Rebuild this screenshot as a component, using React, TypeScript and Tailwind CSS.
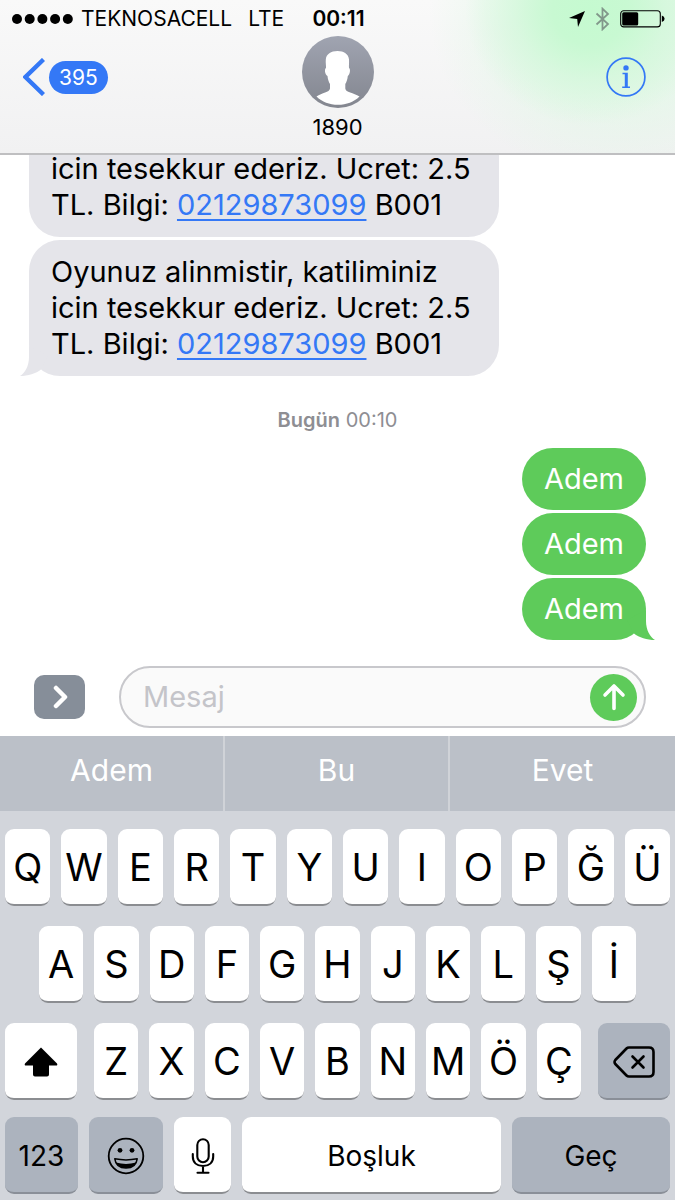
import React from 'react';

const received = [
  { id: 1, before: 'Oyunuz alinmistir, katiliminiz icin tesekkur ederiz. Ucret: 2.5 TL. Bilgi: ', phone: '02129873099', after: ' B001' },
  { id: 2, before: 'Oyunuz alinmistir, katiliminiz icin tesekkur ederiz. Ucret: 2.5 TL. Bilgi: ', phone: '02129873099', after: ' B001' },
];

const sent = ['Adem', 'Adem', 'Adem'];
const suggestions = ['Adem', 'Bu', 'Evet'];

const rowOne = ['Q', 'W', 'E', 'R', 'T', 'Y', 'U', 'I', 'O', 'P', 'Ğ', 'Ü'];
const rowTwo = ['A', 'S', 'D', 'F', 'G', 'H', 'J', 'K', 'L', 'Ş', 'İ'];
const rowThree = ['Z', 'X', 'C', 'V', 'B', 'N', 'M', 'Ö', 'Ç'];

const StatusBar: React.FC = () => (
  <div className="grid grid-cols-[1fr_auto_1fr] items-center h-9 pt-0.5 pl-3 pr-2.5 text-[21px] text-black">
    <div className="flex items-center">
      <svg width="61" height="10" viewBox="0 0 61 10" aria-hidden="true">
        <circle cx="5" cy="5" r="5" />
        <circle cx="17.7" cy="5" r="5" />
        <circle cx="30.4" cy="5" r="5" />
        <circle cx="43.1" cy="5" r="5" />
        <circle cx="55.8" cy="5" r="5" />
      </svg>
      <span className="ml-2">TEKNOSACELL</span>
      <span className="ml-4">LTE</span>
    </div>
    <span className="font-semibold">00:11</span>
    <div className="flex items-center justify-end">
      {/* Location */}
      <svg width="16" height="16" viewBox="0 0 16 16" aria-hidden="true">
        <path d="M16 0 L9 16 L8.2 8 L0 7 Z" />
      </svg>
      {/* Bluetooth */}
      <svg className="ml-2.5" width="15" height="24" viewBox="0 0 15 24" fill="none" stroke="#82978a" strokeWidth="1.8" aria-hidden="true">
        <path d="M1.5 6.5 L13 17 L7.5 22.3 V1.7 L13 7 L1.5 17.5" />
      </svg>
      {/* Battery */}
      <svg className="ml-2.5" width="45" height="18" viewBox="0 0 45 18" aria-hidden="true">
        <rect x="0.7" y="0.7" width="39.6" height="16.2" rx="3" fill="none" stroke="#000" strokeWidth="1.1" />
        <rect x="2.2" y="2.2" width="16" height="13.2" rx="1.5" />
        <path d="M41.8 5.5 Q44.6 6.5 44.6 8.8 Q44.6 11.1 41.8 12.1 Z" />
      </svg>
    </div>
  </div>
);

const Header: React.FC = () => (
  <header className="shrink-0 border-b-2 border-[#bfbfc1] bg-[radial-gradient(ellipse_125px_115px_at_590px_10px,#c5fad0_0%,#c8f9d2_30%,#d2f8dab0_60%,#e8f7eb00_100%),radial-gradient(ellipse_190px_165px_at_620px_15px,#d8f8de_0%,#e0f8e5c0_45%,#f2f6f300_100%),linear-gradient(#f9f9f9,#f1f1f2)]">
    <StatusBar />
    <div className="grid grid-cols-[1fr_auto_1fr] items-start px-[23px] pb-3">
      <a href="#list" className="flex items-center gap-1 h-10 mt-[21px] justify-self-start" aria-label="395">
        <svg width="22" height="38" viewBox="0 0 22 38" fill="none" stroke="#3478f6" strokeWidth="4.4" aria-hidden="true">
          <path d="M20.5 1.5 L2.5 19 L20.5 36.5" />
        </svg>
        <span className="rounded-full bg-[#3478f6] px-2.5 text-[21px] leading-[33px] text-white">395</span>
      </a>
      <div className="flex flex-col items-center gap-[5px]">
        <svg width="72" height="72" viewBox="0 0 72 72" aria-hidden="true">
          <defs>
            <linearGradient id="avatar" x1="0" y1="0" x2="0" y2="1">
              <stop offset="0" stopColor="#a0a4b1" />
              <stop offset="1" stopColor="#83868f" />
            </linearGradient>
          </defs>
          <circle cx="36" cy="36" r="36" fill="url(#avatar)" />
          <path
            d="M35.5 15 C42 15 46.500 18 47 23.500 C47.200 27 46.800 30 47 32 C48.800 33 48 38.500 45.800 40 C45.500 43.500 44.500 46 43.300 48 V52.500 C43.500 56.500 51.500 56.500 57.500 60.500 C52 66 44.500 68.800 36 68.800 C27.500 68.800 20 66 14.500 60.500 C20 56.500 27.500 56.500 28 52.500 V48 C26.800 46 25.800 43.500 25.500 40 C22.800 38.500 22.200 33 24 32 C24.200 30 23.500 27 23.800 23.500 C24.300 18 29 15 35.500 15 Z"
            fill="#fff"
          />
        </svg>
        <h1 className="text-[22px] leading-7 text-black">1890</h1>
      </div>
      <button type="button" aria-label="Bilgi" className="mr-1.5 mt-[21px] justify-self-end">
        <svg width="40" height="40" viewBox="0 0 40 40" aria-hidden="true">
          <circle cx="20" cy="20" r="18.9" fill="none" stroke="#3478f6" strokeWidth="1.7" />
          <circle cx="20" cy="10.9" r="2.7" fill="#3478f6" />
          <path d="M16.5 15.8 H21.8 V29.6 H24 V31 H16.2 V29.6 H18.8 V17.2 H16.5 Z" fill="#3478f6" />
        </svg>
      </button>
    </div>
  </header>
);

const Messages: React.FC = () => (
  <main className="flex flex-1 min-h-0 flex-col justify-end overflow-hidden px-[29px] pb-[26px] text-[29px] leading-9">
    <div className="flex flex-col items-start gap-[3px]">
      {received.map((m, i) => (
        <div key={m.id} className="relative max-w-[470px] rounded-[31px] bg-[#e5e5ea] px-[22px] py-3.5 text-black">
          <p>
            {m.before}
            <a href={`tel:${m.phone}`} className="text-[#3478f6] underline decoration-2 underline-offset-4">{m.phone}</a>
            {m.after}
          </p>
          {i === received.length - 1 && (
            <svg className="absolute bottom-0 -left-[9px]" width="30" height="30" viewBox="0 0 30 30" fill="#e5e5ea" aria-hidden="true">
              <path d="M9 0 V11 C9 20 5 27 0 30 C8 30 16 27.5 21 23.5 L28 10 Z" />
            </svg>
          )}
        </div>
      ))}
    </div>
    <p className="mt-8 mb-4 text-center text-xl leading-6 text-[#8e8e93]">
      <span className="font-semibold">Bugün</span> 00:10
    </p>
    <div className="flex flex-col items-end gap-[3px]">
      {sent.map((text, i) => (
        <div key={i} className="relative rounded-full bg-[#5ecb5a] px-[22px] py-[13px] text-white">
          <p>{text}</p>
          {i === sent.length - 1 && (
            <svg className="absolute bottom-0 -right-[9px]" width="30" height="30" viewBox="0 0 30 30" fill="#5ecb5a" aria-hidden="true">
              <path d="M21 0 V11 C21 20 25 27 30 30 C22 30 14 27.5 9 23.5 L2 10 Z" />
            </svg>
          )}
        </div>
      ))}
    </div>
  </main>
);

const Composer: React.FC = () => (
  <form className="flex shrink-0 items-center gap-[34px] pl-[34px] pr-[29px] pb-2" onSubmit={(e) => e.preventDefault()}>
    <button type="button" aria-label="Uygulamalar" className="flex h-11 w-[51px] shrink-0 items-center justify-center rounded-[10px] bg-[#868e99]">
      <svg width="16" height="24" viewBox="0 0 16 24" fill="none" stroke="#fff" strokeWidth="4.5" strokeLinecap="round" strokeLinejoin="round" aria-hidden="true">
        <path d="M4 3 L13 12 L4 21" />
      </svg>
    </button>
    <div className="flex h-[62px] min-w-0 flex-1 items-center rounded-full border-2 border-[#c8c8cc] bg-[#fafafa] pl-[22px] pr-[7px]">
      <input
        type="text"
        aria-label="Mesaj"
        placeholder="Mesaj"
        className="min-w-0 flex-1 bg-transparent text-[29px] leading-9 outline-none placeholder:text-[#c4c4c9]"
      />
      <button type="submit" aria-label="Gönder" className="flex size-[47px] items-center justify-center rounded-full bg-[#5ecb5a]">
        <svg width="24" height="28" viewBox="0 0 24 28" fill="none" stroke="#fff" strokeWidth="3.6" strokeLinecap="round" strokeLinejoin="round" aria-hidden="true">
          <path d="M12 25.5 V3 M3 12 L12 3 L21 12" />
        </svg>
      </button>
    </div>
  </form>
);

const keyBase = 'flex h-[77px] items-center justify-center rounded-[9px] border-b-2 pt-0.5 text-black';
const lightKey = `${keyBase} border-[#8b8d91] bg-white`;
const darkKey = `${keyBase} border-[#8a8f98] bg-[#acb3be]`;

const Letters: React.FC<{ keys: string[] }> = ({ keys }) => (
  <>
    {keys.map((k) => (
      <button key={k} type="button" className={`${lightKey} min-w-0 flex-1 text-[38px]`}>
        {k}
      </button>
    ))}
  </>
);

const Keyboard: React.FC = () => (
  <section aria-label="Klavye" className="shrink-0 bg-[#d2d5db]">
    <div className="grid grid-cols-3 divide-x-2 divide-[#d0d3d8] bg-[#bbc0c8]">
      {suggestions.map((s) => (
        <button key={s} type="button" className="h-[75px] pb-1.5 text-[30px] text-white">
          {s}
        </button>
      ))}
    </div>
    <div className="flex flex-col gap-5 px-[5px] pt-[18px]">
      <div className="flex gap-[11px]">
        <Letters keys={rowOne} />
      </div>
      <div className="flex gap-[11px] px-[34px]">
        <Letters keys={rowTwo} />
      </div>
      <div className="flex gap-[17px]">
        <button type="button" aria-label="Shift" className={`${lightKey} w-[72px]`}>
          <svg width="34" height="30" viewBox="0 0 34 30" aria-hidden="true">
            <path d="M17 0.5 L33 16.5 Q34 18.5 32 18.5 H25 V27.5 Q25 29.5 23 29.5 H11 Q9 29.5 9 27.5 V18.5 H2 Q0 18.5 1 16.5 Z" />
          </svg>
        </button>
        <div className="flex flex-1 gap-[11px]">
          <Letters keys={rowThree} />
        </div>
        <button type="button" aria-label="Sil" className={`${darkKey} w-[72px]`}>
          <svg width="42" height="32" viewBox="0 0 42 32" fill="none" stroke="#000" strokeWidth="2.6" strokeLinecap="round" strokeLinejoin="round" aria-hidden="true">
            <path d="M16 1.5 H36 Q40.5 1.5 40.5 6 V26 Q40.5 30.5 36 30.5 H16 Q14.5 30.5 13.5 29.5 L2.3 18 Q0.8 16 2.3 14 L13.5 2.5 Q14.5 1.5 16 1.5 Z" />
            <path d="M19.5 10.5 L30.5 21.5 M30.5 10.5 L19.5 21.5" />
          </svg>
        </button>
      </div>
    </div>
    <div className="flex gap-[11px] px-[5px] pt-[17px] pb-1.5 text-[28px]">
      <button type="button" className={`${darkKey} w-[73px]`}>123</button>
      <button type="button" aria-label="Emoji" className={`${darkKey} w-[74px]`}>
        <svg width="38" height="38" viewBox="0 0 38 38" aria-hidden="true">
          <circle cx="19" cy="19" r="17.3" fill="none" stroke="#000" strokeWidth="1.8" />
          <circle cx="13" cy="13.3" r="2.4" />
          <circle cx="25" cy="13.3" r="2.4" />
          <path d="M7.8 21.8 Q19 24 30.2 21.8 Q29 31 19 31 Q9 31 7.8 21.8 Z" fill="none" stroke="#000" strokeWidth="1.5" strokeLinejoin="round" />
          <path d="M9 25.6 Q19 28.4 29 25.6 Q26 31 19 31 Q12 31 9 25.6 Z" />
        </svg>
      </button>
      <button type="button" aria-label="Dikte" className={`${lightKey} w-[57px]`}>
        <svg width="24" height="36" viewBox="0 0 24 36" fill="none" stroke="#000" strokeWidth="2.1" strokeLinecap="round" aria-hidden="true">
          <rect x="6.3" y="1.2" width="11.4" height="23" rx="5.7" />
          <path d="M1.8 16 V18.5 C1.8 24.5 6 28 12 28 C18 28 22.2 24.5 22.2 18.5 V16 M12 28 V34.5 M6.5 34.7 H17.5" />
        </svg>
      </button>
      <button type="button" className={`${lightKey} min-w-0 flex-1`}>Boşluk</button>
      <button type="button" className={`${darkKey} w-[158px]`}>Geç</button>
    </div>
  </section>
);

const App: React.FC = () => {
  return (
    <div className="flex h-screen flex-col bg-white font-['Inter',sans-serif]">
      <Header />
      <Messages />
      <Composer />
      <Keyboard />
    </div>
  );
};

export default App;
